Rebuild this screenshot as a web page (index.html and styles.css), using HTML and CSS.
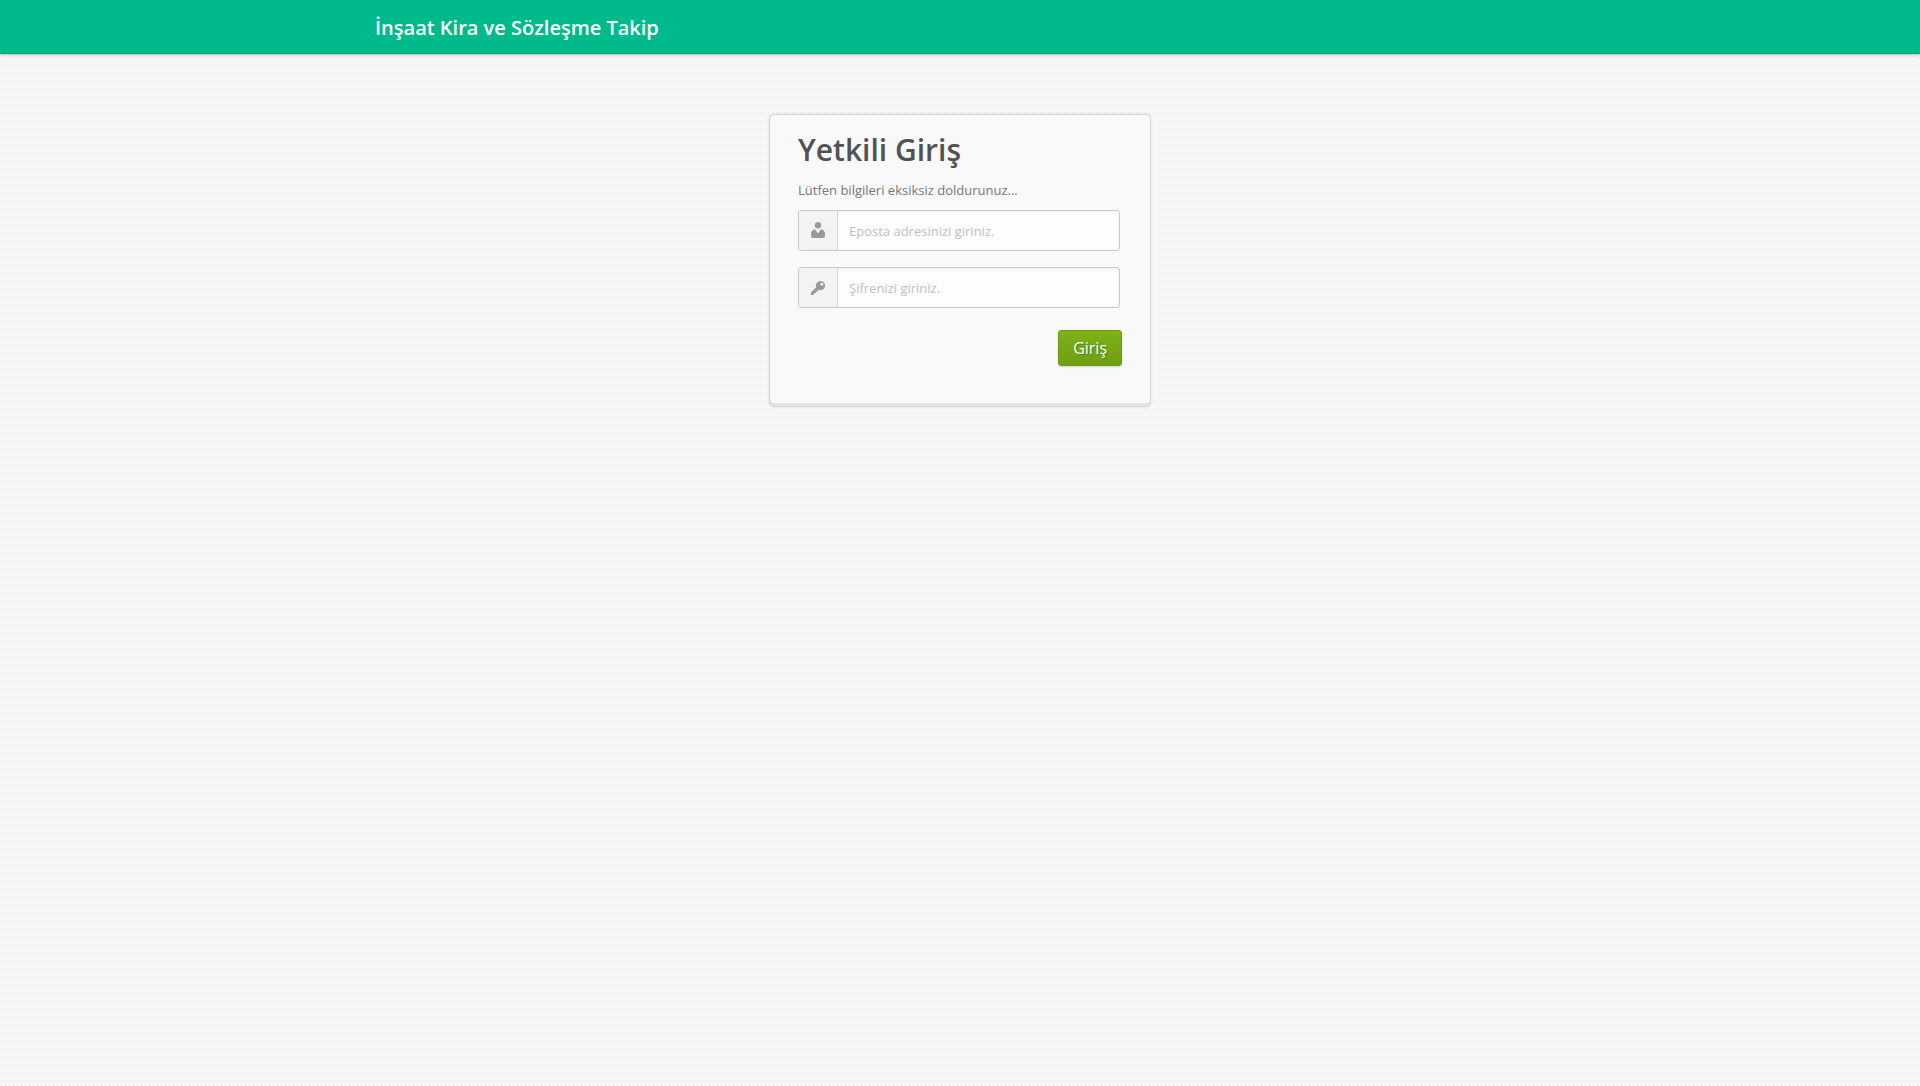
FILE: index.html
```html
<!DOCTYPE html>
<html lang="tr">
<head>
<meta charset="utf-8">
<meta name="viewport" content="width=device-width, initial-scale=1">
<title>İnşaat Kira ve Sözleşme Takip</title>
<link rel="stylesheet" href="styles.css">
</head>
<body>
<header class="navbar">
  <div class="container">
    <a class="brand" href="#">İnşaat Kira ve Sözleşme Takip</a>
  </div>
</header>
<main class="account">
  <form class="account-form" action="#" method="post">
    <h1>Yetkili Giriş</h1>
    <p>Lütfen bilgileri eksiksiz doldurunuz...</p>
    <div class="field">
      <label class="field-icon" for="email" aria-label="Eposta">
        <svg width="16" height="18" viewBox="0 1 16 18" aria-hidden="true">
          <circle cx="8" cy="4.200" r="3.200"/>
          <path d="M4 8.400 Q5 8.200 5.500 9 L8 12.400 L10.500 9 Q11 8.200 12 8.400 Q15 9.800 15 13 V15 Q15 17 13 17 H3 Q1 17 1 15 V13 Q1 9.800 4 8.400Z"/>
        </svg>
      </label>
      <input id="email" type="email" name="email" placeholder="Eposta adresinizi giriniz.">
    </div>
    <div class="field">
      <label class="field-icon" for="password" aria-label="Şifre">
        <svg width="16" height="18" viewBox="0 0 16 18" aria-hidden="true">
          <path fill-rule="evenodd" d="M10.500 2 a4.600 4.600 0 1 1 -1.300 9 L7.700 11.200 V12.700 H6 V14 H4.500 L3.200 16 H1 V13.400 L6.200 8.300 A4.600 4.600 0 0 1 10.500 2Z M11.800 3.800 a1.500 1.500 0 1 0 .1 0Z"/>
        </svg>
      </label>
      <input id="password" type="password" name="password" placeholder="Şifrenizi giriniz.">
    </div>
    <div class="actions">
      <button type="submit">Giriş</button>
    </div>
  </form>
</main>
</body>
</html>
```
FILE: styles.css
```css
* {
  box-sizing: border-box;
}

body {
  margin: 0;
  min-height: 100vh;
  color: #777;
  font: 13px/20px "Open Sans", sans-serif;
  background-color: #f7f7f7;
  background-image:
    radial-gradient(circle at 0 0, #ebebeb 1px, transparent 1px),
    radial-gradient(circle at 2px 2px, #f2f2f2 1px, transparent 1px);
  background-size: 4px 4px;
}

.navbar {
  background: #00ba8b;
  border-bottom: 1px solid #0ba47d;
  box-shadow: 0 1px 3px rgba(0, 0, 0, 0.25);
}

.container {
  max-width: 1170px;
  margin: 0 auto;
  padding: 17px 0 15px;
}

.brand {
  display: inline-block;
  vertical-align: top;
  color: #fff;
  font-size: 20px;
  font-weight: 600;
  line-height: 21px;
  text-decoration: none;
}

.account {
  padding: 60px 0;
}

.account-form {
  max-width: 382px;
  margin: 0 auto;
  padding: 20px 28px 40px;
  background: #f9f9f9;
  border: 1px solid #d5d5d5;
  border-radius: 5px;
  box-shadow: inset 0 -3px 0 #e4e4e4, 0 0 2px #dadada;
}

h1 {
  margin: 0 0 15px;
  color: #525252;
  font-size: 30px;
  font-weight: 600;
  line-height: 30px;
}

p {
  margin: 0 0 10px;
}

.field {
  display: flex;
  height: 41px;
  margin: 0 2px 16px 0;
  background: #fdfdfd;
  border: 1px solid #c9c9c9;
  border-radius: 3px;
  box-shadow: inset 1px 1px 4px #f0f0f0;
}

.field-icon {
  display: flex;
  flex: none;
  align-items: center;
  justify-content: center;
  width: 39px;
  background: #f3f3f3;
  border-right: 1px solid #d5d5d5;
  border-radius: 2px 0 0 2px;
}

.field-icon svg {
  fill: #999;
}

.field input {
  flex: 1;
  min-width: 0;
  padding: 0 11px;
  color: #777;
  font: inherit;
  background: transparent;
  border: 0;
}

.field input::placeholder {
  color: #bfbfbf;
}

.actions {
  display: flex;
  justify-content: flex-end;
  padding-top: 6px;
}

button {
  height: 36px;
  padding: 0 14px;
  color: #fff;
  font: 16px/34px "Open Sans", sans-serif;
  text-shadow: 1px 1px 1px #4d7a08;
  background: linear-gradient(#7eb216, #6f9e14);
  border: 1px solid #6b9a10;
  border-radius: 3px;
  box-shadow: 0 1px 2px rgba(0, 0, 0, 0.15);
}
```
